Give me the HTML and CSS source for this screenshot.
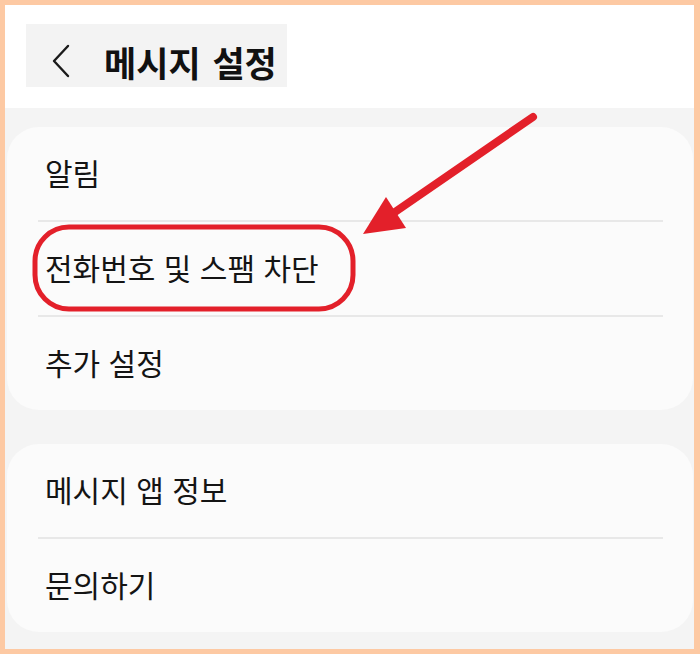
FILE: index.html
```html
<!DOCTYPE html>
<html lang="ko">
<head>
<meta charset="utf-8">
<link rel="stylesheet" href="styles.css">
</head>
<body>
<div class="frame">
  <header class="header">
    <div class="title-box">
      <svg class="back" width="22" height="34" viewBox="0 0 22 34"><path d="M17 2 L3 17 L17 32" fill="none" stroke="#1a1a1a" stroke-width="2.4" stroke-linecap="round" stroke-linejoin="round"/></svg>
      <h1 class="title">메시지 설정</h1>
    </div>
  </header>
  <main class="content">
    <section class="card">
      <div class="row">알림</div>
      <div class="divider"></div>
      <div class="row">전화번호 및 스팸 차단</div>
      <div class="divider"></div>
      <div class="row">추가 설정</div>
    </section>
    <section class="card">
      <div class="row">메시지 앱 정보</div>
      <div class="divider"></div>
      <div class="row">문의하기</div>
    </section>
  </main>
  <svg class="annot" width="700" height="654" viewBox="0 0 700 654">
    <rect x="35" y="227" width="318" height="82" rx="34" ry="34" fill="none" stroke="#e3202a" stroke-width="5"/>
    <line x1="533" y1="117" x2="395" y2="212" stroke="#e3202a" stroke-width="8" stroke-linecap="round"/>
    <polygon points="363,234 386,197 406,228" fill="#e3202a"/>
  </svg>
</div>
</body>
</html>
```

FILE: styles.css
```css
* { box-sizing: border-box; }
html, body { margin: 0; padding: 0; }
body {
  width: 700px;
  height: 654px;
  font-family: "Noto Sans CJK KR", "Noto Sans", sans-serif;
  color: #111;
}
.frame {
  position: relative;
  width: 700px;
  height: 654px;
  border: 5px solid #fdc9a3;
  border-right-width: 6px;
  background: #f4f4f4;
  overflow: hidden;
}
.header {
  height: 103px;
  background: #ffffff;
  padding: 19px 0 0 21px;
}
.title-box {
  width: 261px;
  height: 63px;
  background: #f3f3f3;
  display: flex;
  align-items: center;
  padding: 11px 0 0 25px;
}
.back { flex: none; }
.title {
  margin: 0 0 0 31px;
  font-size: 35px;
  font-weight: 700;
  word-spacing: 2px;
  line-height: 1;
  color: #111;
  white-space: nowrap;
}
.content {
  padding: 19px 1px 0 2px;
  display: flex;
  flex-direction: column;
  gap: 34px;
}
.card {
  background: #fbfbfb;
  border-radius: 32px;
  display: flex;
  flex-direction: column;
}
.row {
  height: 93px;
  display: flex;
  align-items: center;
  padding: 0 0 4px 38px;
  font-size: 30px;
  color: #141414;
}
.divider {
  height: 2px;
  margin: 0 30px 0 31px;
  background: #e8e8e8;
}
.annot {
  position: absolute;
  left: -5px;
  top: -5px;
  pointer-events: none;
}
```
